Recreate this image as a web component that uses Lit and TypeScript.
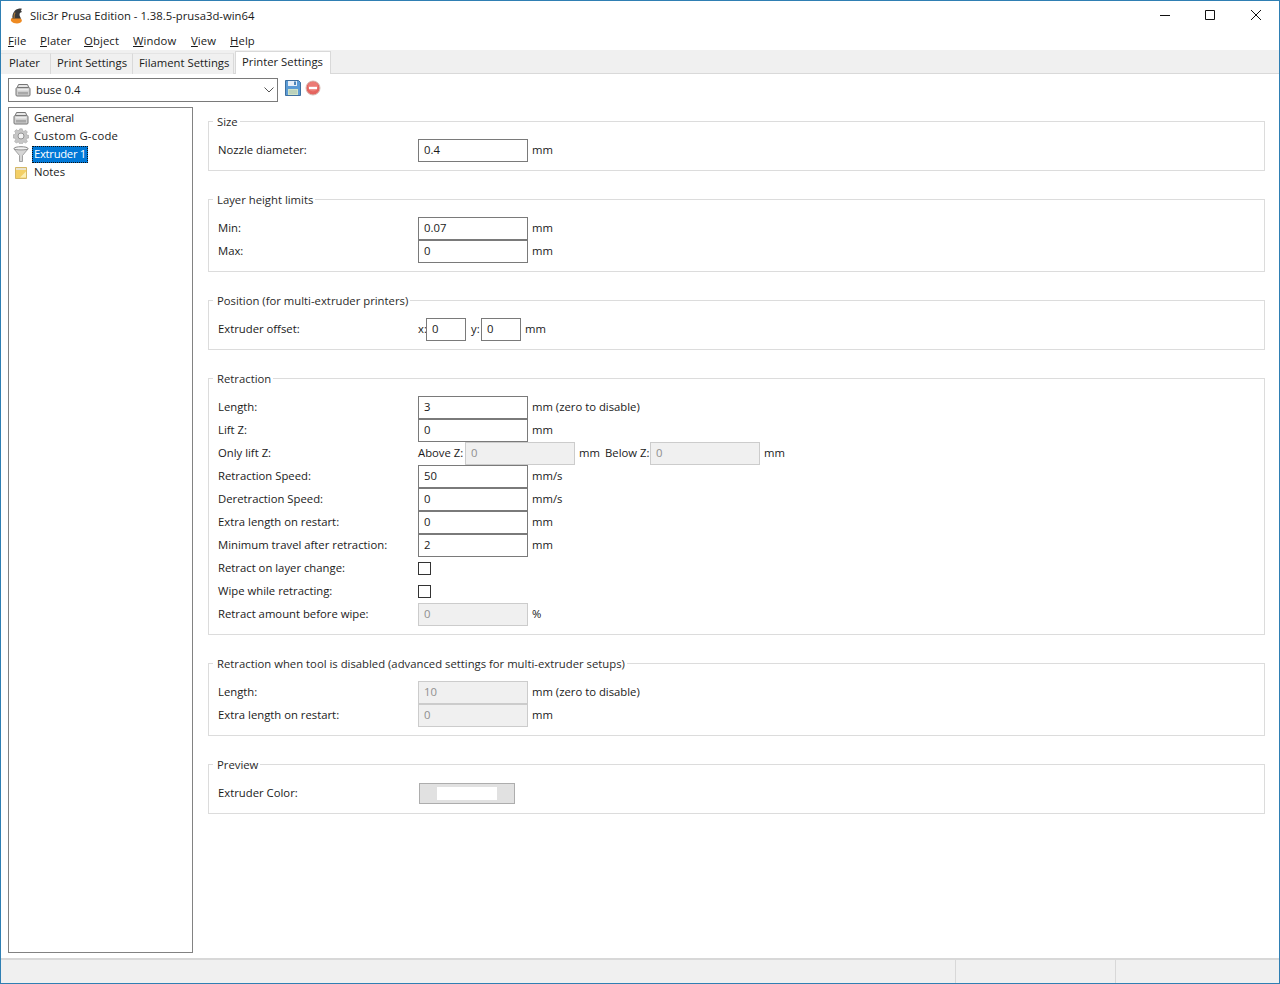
import { LitElement, html, css } from "lit";
import { customElement } from "lit/decorators.js";

const printerIcon = html`<svg class="ico" viewBox="0 0 16 16" width="16" height="16">
  <path d="M3.500 2.500h9l1.500 3.500H2z" fill="#e6e6e6" stroke="#767676"/>
  <path d="M1 7c0-.8.6-1.500 1.500-1.500h11c.9 0 1.500.7 1.500 1.500v6c0 .6-.4 1-1 1H2c-.6 0-1-.4-1-1z" fill="#cfcfcf" stroke="#777"/>
  <path d="M2.500 7h11v1.500h-11z" fill="#ececec"/>
  <path d="M3 10h10v2.500H3z" fill="#a8a8a8"/>
</svg>`;

const gearIcon = html`<svg class="ico" viewBox="0 0 16 16" width="16" height="16">
  <path d="M6.800.8h2.400l.4 2 1.400.6 1.700-1.100 1.700 1.700-1.100 1.700.6 1.400 2 .4v2.400l-2 .4-.6 1.400 1.100 1.700-1.700 1.700-1.700-1.100-1.400.6-.4 2H6.800l-.4-2-1.400-.6-1.700 1.100-1.700-1.700 1.100-1.700-.6-1.400-2-.4V6.800l2-.4.6-1.400-1.100-1.700 1.700-1.700 1.700 1.100 1.400-.6z" fill="#c6c6c6" stroke="#a2a2a2" stroke-width=".6"/>
  <circle cx="8" cy="8" r="3" fill="#f4f4f4" stroke="#939393"/>
</svg>`;

const funnelIcon = html`<svg class="ico" viewBox="0 0 16 16" width="16" height="16">
  <ellipse cx="8" cy="2.500" rx="7" ry="1.800" fill="#f2f2f2" stroke="#8b8b8b"/>
  <path d="M1 3l5.500 6.500V15.500h3V9.500L15 3c-2 1.300-12 1.300-14 0z" fill="#d6d6d6" stroke="#8f8f8f" stroke-width=".8"/>
</svg>`;

const notesIcon = html`<svg class="ico" viewBox="0 0 16 16" width="16" height="16">
  <path d="M2.500 3.500h11v11h-11z" fill="#f3cf66" stroke="#d5b765"/>
  <path d="M3 4h10v2H3z" fill="#e9e3cf"/>
  <path d="M7 13.500l6-6v6z" fill="#fbeeb4"/>
</svg>`;

const saveIcon = html`<svg viewBox="0 0 16 16" width="16" height="16">
  <path d="M.5.500h13l2 2v13H.5z" fill="#5b9bd5" stroke="#3d6f9f"/>
  <path d="M3 1h9v5H3z" fill="#e8f0f8"/>
  <path d="M9 1.500h2v3.500H9z" fill="#4d84b8"/>
  <path d="M3 9h10v6H3z" fill="#cfe3c9"/>
  <path d="M4 11h8M4 13h8" stroke="#9fb9a8" stroke-width=".8"/>
</svg>`;

const deleteIcon = html`<svg viewBox="0 0 16 16" width="16" height="16">
  <circle cx="8" cy="8" r="7" fill="#e5645f" stroke="#d6bdb6"/>
  <circle cx="8" cy="6.500" r="5" fill="#ee8a84" opacity=".6"/>
  <path d="M4 6.800h8v2.400H4z" fill="#fff"/>
</svg>`;

const logoIcon = html`<svg viewBox="0 0 14 16" width="14" height="16">
  <path d="M1.500 13.500c-1-1-.8-2.500.3-3.500L9 9.500c1.800.5 3.300 2 2.800 3.500-.4 1.500-2.300 2.500-4.800 2.500s-4.500-1-5.500-2z" fill="#ee8a22"/>
  <path d="M2.500 10.500C2 7.500 3 4.500 5 2.500 6.800.8 9.500.3 11.500.5c.4.800 0 1.500-.8 2 .8.200 1.300 1 .8 1.800-1 .2-1.700.8-1.900 1.700-.3 1.700.6 3 1.600 4.500z" fill="#3a3a3a"/>
  <path d="M5 4.500c-.9 1.800-1.200 3.700-.9 5.800" stroke="#a9793c" stroke-width="1.200" fill="none"/>
</svg>`;

type Field =
  | { kind: "input"; label: string; value: string; unit?: string; disabled?: boolean }
  | { kind: "check"; label: string }
  | { kind: "offset"; label: string }
  | { kind: "lift"; label: string }
  | { kind: "color"; label: string };

const groups: { title: string; fields: Field[] }[] = [
  { title: "Size", fields: [{ kind: "input", label: "Nozzle diameter:", value: "0.4", unit: "mm" }] },
  {
    title: "Layer height limits",
    fields: [
      { kind: "input", label: "Min:", value: "0.07", unit: "mm" },
      { kind: "input", label: "Max:", value: "0", unit: "mm" },
    ],
  },
  { title: "Position (for multi-extruder printers)", fields: [{ kind: "offset", label: "Extruder offset:" }] },
  {
    title: "Retraction",
    fields: [
      { kind: "input", label: "Length:", value: "3", unit: "mm (zero to disable)" },
      { kind: "input", label: "Lift Z:", value: "0", unit: "mm" },
      { kind: "lift", label: "Only lift Z:" },
      { kind: "input", label: "Retraction Speed:", value: "50", unit: "mm/s" },
      { kind: "input", label: "Deretraction Speed:", value: "0", unit: "mm/s" },
      { kind: "input", label: "Extra length on restart:", value: "0", unit: "mm" },
      { kind: "input", label: "Minimum travel after retraction:", value: "2", unit: "mm" },
      { kind: "check", label: "Retract on layer change:" },
      { kind: "check", label: "Wipe while retracting:" },
      { kind: "input", label: "Retract amount before wipe:", value: "0", unit: "%", disabled: true },
    ],
  },
  {
    title: "Retraction when tool is disabled (advanced settings for multi-extruder setups)",
    fields: [
      { kind: "input", label: "Length:", value: "10", unit: "mm (zero to disable)", disabled: true },
      { kind: "input", label: "Extra length on restart:", value: "0", unit: "mm", disabled: true },
    ],
  },
  { title: "Preview", fields: [{ kind: "color", label: "Extruder Color:" }] },
];

const menus: [string, string, number][] = [
  ["F", "ile", 32],
  ["P", "later", 44],
  ["O", "bject", 49],
  ["W", "indow", 58],
  ["V", "iew", 39],
  ["H", "elp", 30],
];

const tabs = [
  { label: "Plater", width: 50, pad: 8 },
  { label: "Print Settings", width: 82, pad: 6 },
  { label: "Filament Settings", width: 101, pad: 6 },
  { label: "Printer Settings", width: 96, pad: 6, active: true },
];

const tree = [
  { icon: printerIcon, label: "General", spacing: -0.25 },
  { icon: gearIcon, label: "Custom G-code", spacing: 0.25 },
  { icon: funnelIcon, label: "Extruder 1", spacing: -0.3, selected: true },
  { icon: notesIcon, label: "Notes", spacing: 0 },
];

@customElement("app-root")
export class AppRoot extends LitElement {
  static styles = css`
    :host {
      display: block;
      width: 1280px;
      height: 984px;
      font-family: "Open Sans", "Noto Sans", "Liberation Sans", sans-serif;
      font-size: 11.3px;
      color: #1a1a1a;
      background: #fff;
    }
    .window {
      box-sizing: border-box;
      width: 1280px;
      height: 984px;
      border: 1px solid #2f7fb3;
      display: flex;
      flex-direction: column;
    }
    .titlebar {
      height: 29px;
      flex: none;
      display: flex;
      align-items: center;
      padding-left: 9px;
    }
    .logo {
      width: 14px;
      height: 16px;
      margin-right: 6px;
      flex: none;
    }
    .title {
      flex: 1;
    }
    .winbtns {
      display: flex;
      flex: none;
      height: 29px;
      align-items: center;
    }
    .winbtn {
      box-sizing: border-box;
      width: 46px;
      height: 29px;
      padding-bottom: 1px;
      display: flex;
      align-items: center;
      justify-content: center;
    }
    .winbtn.min svg {
      margin-left: 2px;
    }
    .menubar {
      height: 20px;
      flex: none;
      display: flex;
      align-items: center;
      padding-left: 7px;
      letter-spacing: 0.01em;
    }
    .menu u {
      text-underline-offset: 1px;
    }
    .tabs {
      height: 24px;
      flex: none;
      background: #f0f0f0;
      display: flex;
      align-items: flex-end;
      box-sizing: border-box;
      border-bottom: 1px solid #d9d9d9;
    }
    .tab {
      box-sizing: border-box;
      height: 21px;
      margin-bottom: -1px;
      padding-bottom: 4px;
      display: flex;
      align-items: center;
      white-space: nowrap;
      border-right: 1px solid #d9d9d9;
      border-top: 1px solid #e4e4e4;
      background: #f0f0f0;
    }
    .tab.active {
      height: 23px;
      background: #fff;
      border: 1px solid #d9d9d9;
      border-bottom: none;
      margin-left: 1px;
      padding-bottom: 3px;
    }
    .toolbar {
      flex: none;
      height: 24px;
      margin: 4px 0 5px 7px;
      display: flex;
      align-items: center;
    }
    .combo {
      box-sizing: border-box;
      width: 270px;
      height: 24px;
      border: 1px solid #7a7a7a;
      display: flex;
      align-items: center;
      padding-left: 6px;
      background: #fff;
    }
    .combo .text {
      flex: 1;
      margin-left: 5px;
      margin-bottom: 2px;
    }
    .combo svg.arrow {
      margin-right: 3px;
    }
    .ico {
      flex: none;
    }
    .tool {
      width: 16px;
      height: 16px;
      margin-left: 4px;
      margin-top: -4px;
    }
    .tool.first {
      margin-left: 7px;
    }
    .main {
      flex: 1;
      min-height: 0;
      display: flex;
      padding: 0 14px 5px 7px;
    }
    .tree {
      box-sizing: border-box;
      width: 185px;
      flex: none;
      border: 1px solid #828282;
      padding: 1px 0 0 4px;
    }
    .node {
      height: 18px;
      display: flex;
      align-items: center;
    }
    .node .lbl {
      margin-left: 3px;
      padding: 0 2px 2px;
      height: 17px;
      box-sizing: border-box;
      display: flex;
      align-items: center;
    }
    .node.sel .lbl {
      background: #0078d7;
      color: #fff;
      outline: 1px dotted #111;
      outline-offset: -1px;
    }
    .pages {
      flex: 1;
      min-width: 0;
      margin-left: 15px;
      padding-top: 7px;
      display: flex;
      flex-direction: column;
      gap: 21px;
    }
    fieldset {
      margin: 0;
      border: 1px solid #dcdcdc;
      padding: 10px 9px 8px;
      min-width: 0;
    }
    legend {
      padding: 0 2px 0 4px;
      margin-left: -5px;
      height: 15px;
      line-height: 16px;
      color: #2a2a2a;
    }
    .row {
      height: 23px;
      display: flex;
      align-items: center;
    }
    .row span {
      margin-bottom: 2px;
    }
    .label {
      width: 200px;
      flex: none;
    }
    .input {
      box-sizing: border-box;
      width: 110px;
      height: 23px;
      flex: none;
      border: 1px solid #7a7a7a;
      padding-left: 5px;
      line-height: 19px;
      background: #fff;
    }
    .input.dis {
      background: #f0f0f0;
      border-color: #cccccc;
      color: #8f8f8f;
    }
    .input.short {
      width: 40px;
    }
    .unit {
      margin-left: 4px;
    }
    .x-pre {
      width: 8px;
    }
    .y-pre {
      margin-left: 5px;
      width: 10px;
    }
    .above {
      width: 47px;
    }
    .mm-gap {
      margin-left: 4px;
      width: 26px;
    }
    .below {
      width: 45px;
    }
    .check {
      box-sizing: border-box;
      width: 13px;
      height: 13px;
      border: 1px solid #333;
      background: #fff;
    }
    .colorbtn {
      box-sizing: border-box;
      width: 96px;
      height: 21px;
      margin-left: 1px;
      border: 1px solid #adadad;
      background: #e1e1e1;
      display: flex;
      align-items: center;
      justify-content: center;
    }
    .swatch {
      width: 60px;
      height: 13px;
      background: #fff;
    }
    .status {
      height: 25px;
      flex: none;
      box-sizing: border-box;
      background: #f0f0f0;
      border-top: 2px solid #d8d8d8;
      display: flex;
      justify-content: flex-end;
    }
    .cell {
      box-sizing: border-box;
      border-left: 1px solid #d8d8d8;
    }
    .cell.a {
      width: 160px;
    }
    .cell.b {
      width: 164px;
    }
  `;

  private field(f: Field) {
    if (f.kind === "input") {
      return html`<div class="input ${f.disabled ? "dis" : ""}">${f.value}</div>
        <span class="unit">${f.unit}</span>`;
    }
    if (f.kind === "check") return html`<div class="check"></div>`;
    if (f.kind === "offset") {
      return html`<span class="x-pre">x:</span><div class="input short">0</div>
        <span class="y-pre">y:</span><div class="input short">0</div>
        <span class="unit">mm</span>`;
    }
    if (f.kind === "lift") {
      return html`<span class="above">Above Z:</span><div class="input dis">0</div>
        <span class="mm-gap">mm</span><span class="below">Below Z:</span><div class="input dis">0</div>
        <span class="unit">mm</span>`;
    }
    return html`<div class="colorbtn"><div class="swatch"></div></div>`;
  }

  render() {
    return html`<div class="window">
      <div class="titlebar">
        <span class="logo">${logoIcon}</span>
        <span class="title">Slic3r Prusa Edition - 1.38.5-prusa3d-win64</span>
        <div class="winbtns">
          <div class="winbtn min">
            <svg width="10" height="10" viewBox="0 0 10 10"><path d="M0 5.500h10" stroke="#111"/></svg>
          </div>
          <div class="winbtn">
            <svg width="10" height="10" viewBox="0 0 10 10"><path d="M.5.500h9v9h-9z" fill="none" stroke="#111"/></svg>
          </div>
          <div class="winbtn">
            <svg width="10" height="10" viewBox="0 0 10 10"><path d="M0 0l10 10M10 0L0 10" stroke="#111"/></svg>
          </div>
        </div>
      </div>
      <div class="menubar">
        ${menus.map(
          ([k, rest, w]) =>
            html`<span class="menu" style="width:${w}px"><u>${k}</u>${rest}</span>`
        )}
      </div>
      <div class="tabs">
        ${tabs.map(
          (t) => html`<div
            class="tab ${t.active ? "active" : ""}"
            style="width:${t.width}px;padding-left:${t.pad}px"
          >
            ${t.label}
          </div>`
        )}
      </div>
      <div class="toolbar">
        <div class="combo">
          ${printerIcon}
          <span class="text">buse 0.4</span>
          <svg class="arrow" width="10" height="6" viewBox="0 0 10 6">
            <path d="M.5.500L5 5 9.500.500" fill="none" stroke="#555"/>
          </svg>
        </div>
        <span class="tool first">${saveIcon}</span>
        <span class="tool">${deleteIcon}</span>
      </div>
      <div class="main">
        <div class="tree">
          ${tree.map(
            (n) => html`<div class="node ${n.selected ? "sel" : ""}">
              ${n.icon}<span class="lbl" style="letter-spacing:${n.spacing}px">${n.label}</span>
            </div>`
          )}
        </div>
        <div class="pages">
          ${groups.map(
            (g) => html`<fieldset>
              <legend>${g.title}</legend>
              ${g.fields.map(
                (f) => html`<div class="row">
                  <span class="label">${f.label}</span>${this.field(f)}
                </div>`
              )}
            </fieldset>`
          )}
        </div>
      </div>
      <div class="status">
        <div class="cell a"></div>
        <div class="cell b"></div>
      </div>
    </div>`;
  }
}
